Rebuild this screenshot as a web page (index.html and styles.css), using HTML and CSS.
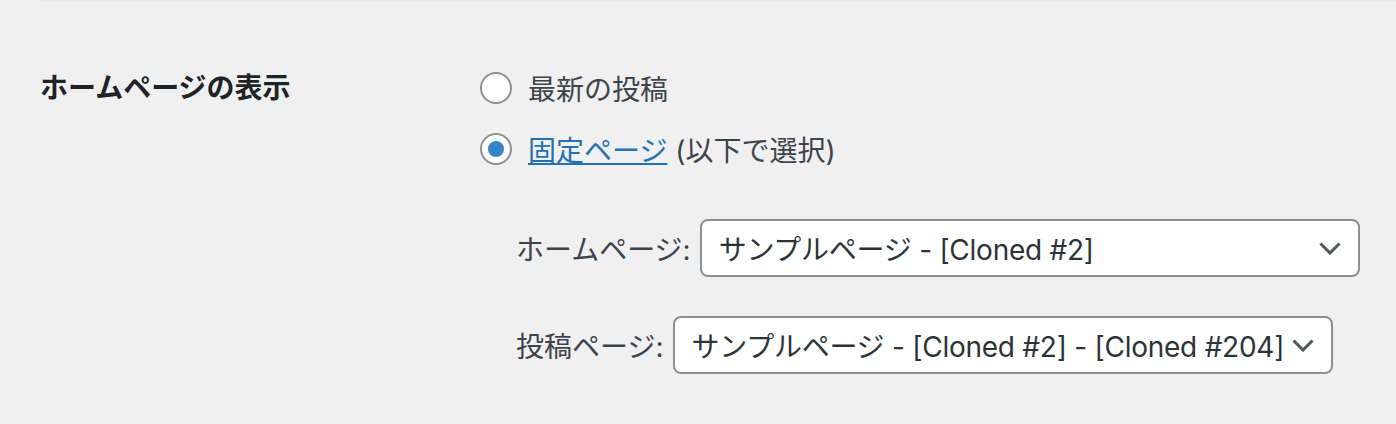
FILE: index.html
```html
<!DOCTYPE html>
<html lang="ja">
<head>
<meta charset="utf-8">
<title>表示設定</title>
<link rel="stylesheet" href="styles.css">
</head>
<body>
<div class="topline"></div>
<div class="row">
  <div class="th">ホームページの表示</div>
  <div class="td">
    <label class="radio-row"><span class="radio"></span><span>最新の投稿</span></label>
    <label class="radio-row"><span class="radio checked"></span><span><a class="link" href="#">固定ページ</a> (以下で選択)</span></label>
    <ul class="pages">
      <li class="page-row"><span class="plabel">ホームページ:</span><span class="select"><span class="stext">サンプルページ - [Cloned #2]</span><svg class="chev" width="22" height="13" viewBox="0 0 22 13"><path d="M1.5 1.5 L11 11 L20.5 1.5" fill="none" stroke="#50575e" stroke-width="3"/></svg></span></li>
      <li class="page-row"><span class="plabel">投稿ページ:</span><span class="select"><span class="stext">サンプルページ - [Cloned #2] - [Cloned #204]</span><svg class="chev" width="22" height="13" viewBox="0 0 22 13"><path d="M1.5 1.5 L11 11 L20.5 1.5" fill="none" stroke="#50575e" stroke-width="3"/></svg></span></li>
    </ul>
  </div>
</div>
</body>
</html>
```
FILE: styles.css
```css
html, body {
  margin: 0;
  padding: 0;
  background: #f0f0f1;
}
body {
  font-family: Inter, "Noto Sans CJK JP", sans-serif;
  font-size: 28px;
  color: #3c434a;
  width: 1396px;
  height: 424px;
  overflow: hidden;
}
.topline {
  height: 3px;
  margin-left: 40px;
  background: linear-gradient(#e5e5e6, #f0f0f1);
}
.row {
  display: flex;
  padding-top: 65px;
}
.th {
  width: 440px;
  padding-left: 40px;
  font-weight: 700;
  color: #1d2327;
  line-height: 40px;
}
.td {
  display: flex;
  flex-direction: column;
}
.radio-row {
  display: flex;
  align-items: center;
  gap: 16px;
  height: 40px;
  margin-bottom: 21px;
}
.radio {
  width: 28px;
  height: 28px;
  border: 2px solid #8c8f94;
  border-radius: 50%;
  background: #fff;
  display: flex;
  align-items: center;
  justify-content: center;
  flex: none;
}
.radio.checked::before {
  content: "";
  width: 16px;
  height: 16px;
  border-radius: 50%;
  background: #3582c4;
}
.link {
  color: #2271b1;
  text-decoration: underline;
  text-underline-offset: 2px;
  text-decoration-thickness: 2px;
}
.pages {
  list-style: none;
  margin: 29px 0 0 36px;
  padding: 0;
}
.page-row {
  display: flex;
  align-items: center;
  height: 58px;
  margin-bottom: 39px;
}
.plabel {
  margin-right: 9px;
}
.select {
  box-sizing: border-box;
  width: 660px;
  height: 58px;
  border: 2px solid #8c8f94;
  border-radius: 8px;
  background: #fff;
  color: #2c3338;
  display: flex;
  align-items: center;
  justify-content: space-between;
  padding: 0 17px 0 17px;
}
.stext {
  white-space: nowrap;
  letter-spacing: -0.25px;
}
.chev {
  flex: none;
}
```
